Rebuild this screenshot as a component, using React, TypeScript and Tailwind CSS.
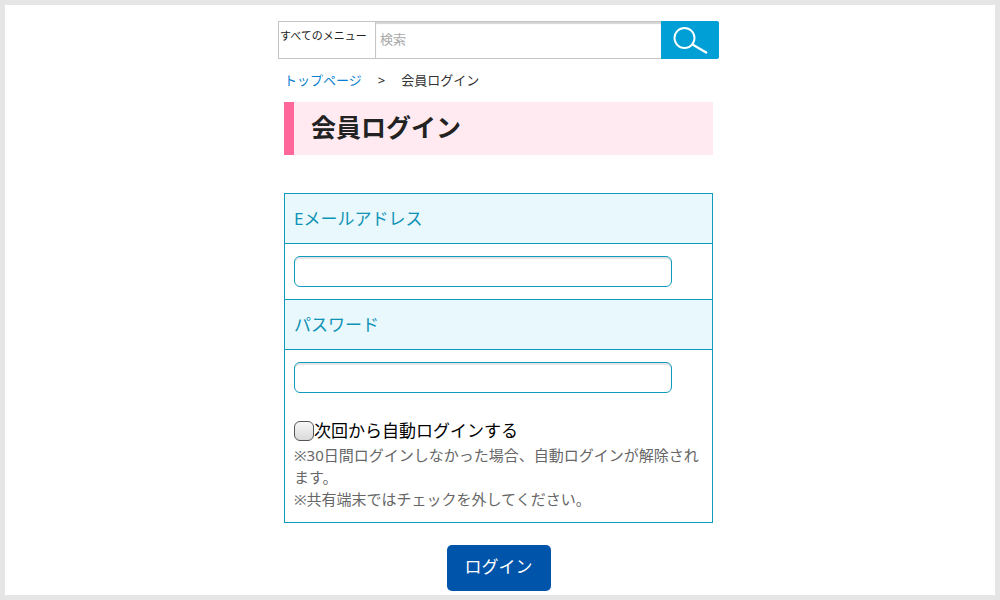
import { useState, type ReactNode } from "react";

function SearchBar() {
  return (
    <form
      role="search"
      onSubmit={(e) => e.preventDefault()}
      className="-mx-1.5 flex h-[38px] items-stretch"
    >
      <select
        aria-label="メニュー"
        className="w-[97px] appearance-none border border-r-0 border-[#c4c4c4] bg-white pb-2 pl-px text-[11px] leading-4 text-[#222]"
      >
        <option>すべてのメニュー</option>
      </select>
      <input
        type="search"
        aria-label="検索"
        placeholder="検索"
        className="min-w-0 flex-1 appearance-none border border-r-0 border-[#c4c4c4] bg-white px-1 text-[13px] shadow-[inset_0_2px_1px_#d4d4d4] outline-none placeholder:text-[#a9a9a9]"
      />
      <button
        type="submit"
        aria-label="検索する"
        className="flex w-[58px] items-center justify-center rounded-r-xs bg-[#009fd6]"
      >
        <svg width="36" height="30" viewBox="0 0 36 30" fill="none" stroke="#fff" aria-hidden="true">
          <circle cx="12.5" cy="13" r="10" strokeWidth="1.9" />
          <path d="M20.5 19.5 35 28" strokeWidth="2.2" />
        </svg>
      </button>
    </form>
  );
}

function Field({ id, label, type, children }: { id: string; label: string; type: string; children?: ReactNode }) {
  return (
    <>
      <div className="flex h-[50px] items-center border-b border-[#0f9abb] bg-[#e9f8fd] px-[9px]">
        <label htmlFor={id} className="text-[17px] leading-6 text-[#0f93b5]">
          {label}
        </label>
      </div>
      <div className="px-[9px] py-3">
        <input
          id={id}
          name={id}
          type={type}
          className="block h-[31px] w-full max-w-[378px] rounded-md border border-[#0f9abb] bg-white px-2 text-base shadow-[inset_0_2px_1px_#e4e4e4] outline-none"
        />
        {children}
      </div>
    </>
  );
}

export default function App() {
  const [remember, setRemember] = useState(false);

  return (
    <div
      lang="ja"
      className="min-h-screen border-5 border-[#e5e5e5] bg-white pt-4 pr-[3px] font-['Noto_Sans','Noto_Sans_CJK_JP',sans-serif] text-[#222]"
    >
      <div className="mx-auto w-full max-w-[429px]">
        <SearchBar />
        <nav aria-label="パンくず" className="mt-[11px] flex gap-4 text-[13px] leading-5 text-[#333]">
          <a href="#top" className="text-[#0b7fd0]">トップページ</a>
          <span className="font-medium">&gt;</span>
          <span>会員ログイン</span>
        </nav>
        <h1 className="mt-3 h-[53px] border-l-10 border-[#ff6699] bg-[#ffeaf1] pl-[17px] text-[25px] leading-[50px] font-bold">
          会員ログイン
        </h1>
        <form onSubmit={(e) => e.preventDefault()}>
          <div className="mt-[38px] border border-[#0f9abb]">
            <div className="border-b border-[#0f9abb]">
              <Field id="email" label="Eメールアドレス" type="email" />
            </div>
            <Field id="password" label="パスワード" type="password">
              <div className="mt-[26px] flex items-center text-[17px] leading-6 text-black">
                <input
                  id="remember"
                  type="checkbox"
                  checked={remember}
                  onChange={(e) => setRemember(e.target.checked)}
                  className="size-5 shrink-0 appearance-none rounded-md border border-[#555] bg-linear-to-b from-[#f8f8f8] to-[#d9d9d9] checked:to-[#0f9abb]"
                />
                <label htmlFor="remember">次回から自動ログインする</label>
              </div>
              <p className="mt-px text-[15px] leading-[22px] text-[#666]">
                ※30日間ログインしなかった場合、自動ログインが解除されます。
                <br />
                ※共有端末ではチェックを外してください。
              </p>
            </Field>
          </div>
          <button
            type="submit"
            className="mx-auto mt-[22px] block h-[46px] w-[104px] rounded-[5px] bg-[#0054a9] pb-0.5 text-[17px] text-white"
          >
            ログイン
          </button>
        </form>
      </div>
    </div>
  );
}
